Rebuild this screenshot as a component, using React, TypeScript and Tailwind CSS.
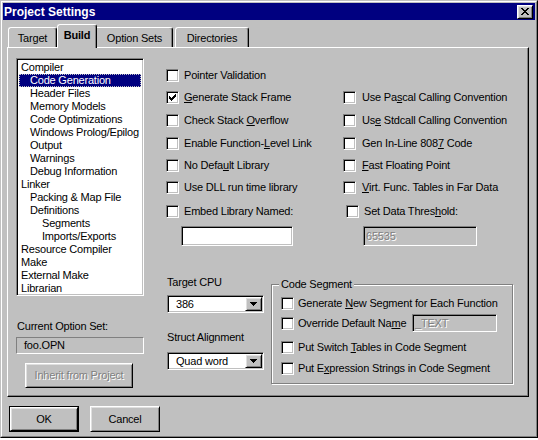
import React from "react"

const sunken =
  "border border-t-[#808080] border-l-[#808080] border-r-white border-b-white shadow-[inset_1px_1px_0_#000,inset_-1px_-1px_0_#c0c0c0]"
const raised =
  "border border-t-white border-l-white border-r-black border-b-black shadow-[inset_1px_1px_0_#dfdfdf,inset_-1px_-1px_0_#808080]"
const disabledText = "text-[#808080] [text-shadow:1px_1px_0_#fff]"

const CheckMark = () => (
  <svg width="7" height="7" viewBox="0 0 7 7" shapeRendering="crispEdges">
    <path
      d="M6 0h1v1h-1z M5 1h2v1h-2z M0 2h1v1h-1z M4 2h3v1h-3z M0 3h2v1h-2z M3 3h3v1h-3z M0 4h5v1h-5z M1 5h3v1h-3z M2 6h1v1h-1z"
      fill="#000"
    />
  </svg>
)

const DownArrow = () => (
  <svg width="7" height="4" viewBox="0 0 7 4" shapeRendering="crispEdges">
    <path d="M0 0h7v1h-7z M1 1h5v1h-5z M2 2h3v1h-3z M3 3h1v1h-1z" fill="#000" />
  </svg>
)

interface TCheck {
  checked?: boolean
  gap?: string
  children: React.ReactNode
}
const Check: React.FC<TCheck> = ({ checked, gap = "ml-[5px]", children }) => (
  <div className="flex items-center">
    <span className={`w-[13px] h-[13px] shrink-0 bg-white flex items-center justify-center ${sunken}`}>
      {checked && <CheckMark />}
    </span>
    <span className={`${gap} leading-[13px] whitespace-nowrap`}>{children}</span>
  </div>
)

const Combo = ({ value }: { value: string }) => (
  <div className={`w-[97px] h-[18px] bg-white flex items-center ${sunken}`}>
    <span className="pl-[8px] flex-1 leading-[13px]">{value}</span>
    <span className={`w-[17px] h-[14px] mr-[1px] bg-[#c0c0c0] flex items-center justify-center ${raised}`}>
      <DownArrow />
    </span>
  </div>
)

const tree: [string, number][] = [
  ["Compiler", 0],
  ["Code Generation", 1],
  ["Header Files", 1],
  ["Memory Models", 1],
  ["Code Optimizations", 1],
  ["Windows Prolog/Epilog", 1],
  ["Output", 1],
  ["Warnings", 1],
  ["Debug Information", 1],
  ["Linker", 0],
  ["Packing & Map File", 1],
  ["Definitions", 1],
  ["Segments", 2],
  ["Imports/Exports", 2],
  ["Resource Compiler", 0],
  ["Make", 0],
  ["External Make", 0],
  ["Librarian", 0],
]
const indent = ["pl-[2px]", "pl-[11px]", "pl-[23px]"]

export default function App() {
  return (
    <div className="w-[538px] h-[440px] bg-white overflow-hidden font-['Liberation_Sans',Arial,sans-serif] text-[11px] tracking-[-0.2px] text-black">
      <div className="h-[438px] border border-t-[#c0c0c0] border-l-[#c0c0c0] border-r-black border-b-black">
        <div className="h-full border border-t-white border-l-white border-r-[#808080] border-b-[#808080] bg-[#c0c0c0] p-px flex flex-col">
          {/* title bar */}
          <div className="h-[17px] bg-[#000080] flex items-center justify-between pl-[1px] pr-[2px]">
            <span className="text-white font-bold text-[12px] tracking-normal leading-[14px]">Project Settings</span>
            <span className={`w-[16px] h-[14px] bg-[#c0c0c0] flex items-center justify-center ${raised}`}>
              <svg width="8" height="7" viewBox="0 0 8 7" shapeRendering="crispEdges">
                <path
                  d="M0 0h2v1h-2z M6 0h2v1h-2z M1 1h2v1h-2z M5 1h2v1h-2z M2 2h4v1h-4z M3 3h2v1h-2z M2 4h4v1h-4z M1 5h2v1h-2z M5 5h2v1h-2z M0 6h2v1h-2z M6 6h2v1h-2z"
                  fill="#000"
                />
              </svg>
            </span>
          </div>

          {/* tabs */}
          <div className="h-[27px] flex items-end pl-[5px]">
            <div className="w-[49px] h-[20px] border-t border-l border-r border-t-white border-l-white border-r-black shadow-[inset_-1px_0_0_#808080] rounded-t-[3px] flex items-center justify-center pt-[1px]">
              Target
            </div>
            <div className="relative z-10 w-[40px] h-[24px] -mb-[1px] bg-[#c0c0c0] border-t border-l border-r border-t-white border-l-white border-r-black shadow-[inset_-1px_0_0_#808080] rounded-t-[3px] flex items-center justify-center pb-[2px] font-bold">
              Build
            </div>
            <div className="w-[76px] h-[20px] border-t border-r border-t-white border-r-black shadow-[inset_-1px_0_0_#808080] rounded-tr-[3px] flex items-center justify-center pt-[1px]">
              Option Sets
            </div>
            <div className="ml-[2px] w-[74px] h-[20px] border-t border-l border-r border-t-white border-l-white border-r-black shadow-[inset_-1px_0_0_#808080] rounded-t-[3px] flex items-center justify-center pt-[1px]">
              Directories
            </div>
          </div>

          {/* tab panel */}
          <div className="ml-[4px] w-[522px] h-[350px] border border-t-white border-l-white border-r-black border-b-black shadow-[inset_-1px_-1px_0_#808080] pl-[8px] pt-[10px] flex">
            {/* left column */}
            <div className="w-[128px] flex flex-col">
              <div className={`h-[238px] bg-white p-[2px] ${sunken}`}>
                {tree.map(([name, level], i) => (
                  <div
                    key={name}
                    className={`h-[13px] leading-[13px] whitespace-nowrap ${indent[level]} ${
                      i === 1 ? "bg-[#000080] text-white outline-1 outline-dotted outline-[#c0c0c0] -outline-offset-1" : ""
                    }`}
                  >
                    {name}
                  </div>
                ))}
              </div>
              <div className="mt-[24px] h-[13px] leading-[13px] pl-[1px]">Current Option Set:</div>
              <div className="mt-[4px] h-[17px] border border-t-[#808080] border-l-[#808080] border-r-white border-b-white flex items-center pl-[7px]">
                foo.OPN
              </div>
              <div className={`mt-[9px] ml-[9px] w-[108px] h-[25px] flex items-center justify-center ${raised} ${disabledText}`}>
                Inherit from Project
              </div>
            </div>

            {/* right area */}
            <div className="ml-[22px] pt-[6px] flex flex-col">
              <div className="grid grid-cols-[177px_180px]">
                <div className="h-[22px] flex items-center">
                  <Check>Pointer Validation</Check>
                </div>
                <div className="h-[22px]" />
                <div className="h-[23px] flex items-center">
                  <Check checked>
                    <u>G</u>enerate Stack Frame
                  </Check>
                </div>
                <div className="h-[23px] flex items-center">
                  <Check gap="ml-[6px]">
                    Use Pa<u>s</u>cal Calling Convention
                  </Check>
                </div>
                <div className="h-[23px] flex items-center">
                  <Check>
                    Check Stack <u>O</u>verflow
                  </Check>
                </div>
                <div className="h-[23px] flex items-center">
                  <Check gap="ml-[6px]">
                    Us<u>e</u> Stdcall Calling Convention
                  </Check>
                </div>
                <div className="h-[22px] flex items-center">
                  <Check>
                    Enable Function-<u>L</u>evel Link
                  </Check>
                </div>
                <div className="h-[22px] flex items-center">
                  <Check gap="ml-[6px]">
                    Gen In-Line 808<u>7</u> Code
                  </Check>
                </div>
                <div className="h-[22px] flex items-center">
                  <Check>
                    No Defa<u>u</u>lt Library
                  </Check>
                </div>
                <div className="h-[22px] flex items-center">
                  <Check gap="ml-[6px]">
                    <u>F</u>ast Floating Point
                  </Check>
                </div>
                <div className="h-[23px] flex items-center">
                  <Check>Use DLL run time library</Check>
                </div>
                <div className="h-[23px] flex items-center">
                  <Check gap="ml-[6px]">
                    <u>V</u>irt. Func. Tables in Far Data
                  </Check>
                </div>
                <div className="h-[24px] flex items-center">
                  <Check>Embed Library Named:</Check>
                </div>
                <div className="h-[24px] flex items-center pl-[3px]">
                  <Check>
                    Set Data Thres<u>h</u>old:
                  </Check>
                </div>
                <div className="mt-[3px] ml-[15px] w-[112px] h-[20px]">
                  <div className={`h-full bg-white ${sunken}`} />
                </div>
                <div className="mt-[3px] ml-[20px] w-[114px] h-[20px]">
                  <div className={`h-full bg-[#c0c0c0] flex items-center pl-[2px] ${sunken} ${disabledText}`}>65535</div>
                </div>
              </div>

              <div className="flex">
                <div className="pl-[1px] pt-[30px] w-[98px] flex flex-col">
                  <div className="h-[13px] leading-[13px]">Target CPU</div>
                  <div className="mt-[6px]">
                    <Combo value="386" />
                  </div>
                  <div className="mt-[18px] h-[13px] leading-[13px]">Struct Alignment</div>
                  <div className="mt-[8px]">
                    <Combo value="Quad word" />
                  </div>
                </div>

                <div className="relative mt-[38px] ml-[7px] w-[242px] h-[100px] border border-[#808080] shadow-[inset_1px_1px_0_#fff,1px_1px_0_#fff] pl-[9px] pt-[8px] flex flex-col">
                  <span className="absolute -top-[7px] left-[7px] px-[2px] bg-[#c0c0c0] leading-[13px]">Code Segment</span>
                  <div className="h-[20px] flex items-center">
                    <Check gap="ml-[4px]">
                      Generate <u>N</u>ew Segment for Each Function
                    </Check>
                  </div>
                  <div className="h-[20px] flex items-center">
                    <Check gap="ml-[4px]">
                      <span className="inline-block w-[114px]">
                        Override Default Na<u>m</u>e
                      </span>
                    </Check>
                    <div className={`w-[85px] h-[18px] bg-[#c0c0c0] flex items-center pl-[2px] ${sunken} ${disabledText}`}>
                      _TEXT
                    </div>
                  </div>
                  <div className="mt-[4px] h-[20px] flex items-center">
                    <Check gap="ml-[4px]">
                      Put Switch <u>T</u>ables in Code Segment
                    </Check>
                  </div>
                  <div className="mt-[1px] h-[20px] flex items-center">
                    <Check gap="ml-[4px]">
                      Put E<u>x</u>pression Strings in Code Segment
                    </Check>
                  </div>
                </div>
              </div>
            </div>
          </div>

          {/* bottom buttons */}
          <div className="flex pl-[6px] pt-[9px]">
            <div className="w-[70px] h-[26px] border border-black">
              <div className={`h-full flex items-center justify-center ${raised}`}>OK</div>
            </div>
            <div className={`ml-[11px] w-[70px] h-[26px] flex items-center justify-center ${raised}`}>Cancel</div>
          </div>
        </div>
      </div>
    </div>
  )
}
